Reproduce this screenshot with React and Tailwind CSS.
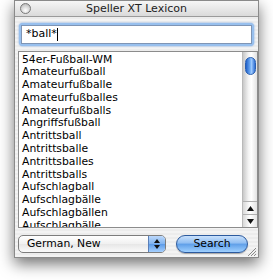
const words = [
  "54er-Fußball-WM",
  "Amateurfußball",
  "Amateurfußballe",
  "Amateurfußballes",
  "Amateurfußballs",
  "Angriffsfußball",
  "Antrittsball",
  "Antrittsballe",
  "Antrittsballes",
  "Antrittsballs",
  "Aufschlagball",
  "Aufschlagbälle",
  "Aufschlagbällen",
  "Aufschlagbälle",
]

function ScrollBar() {
  return (
    <div className="w-[15px] flex flex-col border-l border-[#b9b9b9] bg-[linear-gradient(to_right,#c8c8c8,#f4f4f4_40%,#ffffff_60%,#e2e2e2)]">
      <div className="h-[5px]" />
      <div className="mx-auto w-[11px] h-[18px] rounded-full border border-[#2a5fb0] bg-[linear-gradient(to_right,#1f5fc8,#6aa8f2_45%,#9fcbff_60%,#2f6fd4)]" />
      <div className="flex-1" />
      <div className="h-[1px] bg-[#b0b0b0]" />
      <div className="h-[12px] flex items-center justify-center bg-[linear-gradient(to_right,#d8d8d8,#ffffff_50%,#e4e4e4)]">
        <svg width="7" height="5" viewBox="0 0 7 5"><path d="M3.5 0L7 5H0z" fill="#111" /></svg>
      </div>
      <div className="h-[1px] bg-[#b0b0b0]" />
      <div className="h-[12px] flex items-center justify-center bg-[linear-gradient(to_right,#d8d8d8,#ffffff_50%,#e4e4e4)]">
        <svg width="7" height="5" viewBox="0 0 7 5"><path d="M0 0H7L3.5 5z" fill="#111" /></svg>
      </div>
    </div>
  )
}

export default function App() {
  return (
    <div className="w-[273px] h-[280px] bg-white font-['DejaVu_Sans',sans-serif] text-black">
      <div className="ml-[14px] w-[245px] h-[258px] flex flex-col shadow-[0_6px_14px_rgba(0,0,0,0.55)] border border-[#8a8a8a] bg-[repeating-linear-gradient(to_bottom,#ececec_0px,#ececec_2px,#f3f3f3_2px,#f3f3f3_4px)]">
        {/* title bar */}
        <div className="h-[16px] flex items-center relative border-b border-[#9a9a9a] bg-[linear-gradient(to_bottom,#f6f6f6,#dadada)]">
          <div className="absolute left-[5px] top-[2px] w-[11px] h-[11px] rounded-full border border-[#7a7a7a] bg-[radial-gradient(circle_at_50%_70%,#ffffff,#d0d0d0_60%,#a8a8a8)]" />
          <div className="flex-1 text-center text-[11px] leading-[16px] text-[#222]">Speller XT Lexicon</div>
        </div>

        {/* search field */}
        <div className="mt-[6px] mx-[4px] h-[23px] rounded-[4px] p-[2px] bg-[#98c0ee] shadow-[0_0_2px_#6b9ee0]">
          <div className="h-full bg-white border border-[#7f95b5] flex items-center px-[4px] text-[11px]">
            <span>*ball*</span>
            <span className="w-[1px] h-[13px] bg-black" />
          </div>
        </div>

        {/* list */}
        <div className="mt-[5px] ml-[3px] h-[177px] flex border border-[#8c8c8c] bg-white">
          <div className="flex-1 overflow-hidden pl-[3px] pt-[1.5px]">
            {words.map((w, i) => (
              <div key={i} className="h-[12.8px] text-[10.8px] leading-[12.8px] whitespace-nowrap">{w}</div>
            ))}
          </div>
          <ScrollBar />
        </div>

        {/* bottom controls */}
        <div className="mt-[7px] flex items-center px-[3px] relative">
          <div className="w-[148px] h-[18px] flex rounded-[5px] border border-[#7d7d7d] bg-[linear-gradient(to_bottom,#ffffff,#f0f0f0_50%,#e6e6e6_50%,#fafafa)] overflow-hidden">
            <div className="flex-1 text-[10.8px] leading-[16px] pl-[8px]">German, New</div>
            <div className="w-[17px] border-l border-[#5a7fb8] flex flex-col items-center justify-center gap-[2px] bg-[linear-gradient(to_bottom,#bcd8fb,#7fb3f0_50%,#5a9ae8_50%,#a6d0ff)]">
              <svg width="6" height="4" viewBox="0 0 6 4"><path d="M3 0L6 4H0z" fill="#111" /></svg>
              <svg width="6" height="4" viewBox="0 0 6 4"><path d="M0 0H6L3 4z" fill="#111" /></svg>
            </div>
          </div>
          <div className="ml-[10px] w-[72px] h-[18px] rounded-full border border-[#2c5a9e] flex items-center justify-center text-[10.8px] leading-[16px] bg-[linear-gradient(to_bottom,#c9e1fc,#8fbdf2_45%,#5e9ee8_50%,#9fd0ff)] shadow-[0_1px_1px_rgba(0,0,0,0.3)]">
            Search
          </div>
          <svg className="absolute right-[1px] top-[12px]" width="10" height="10" viewBox="0 0 10 10">
            <path d="M9 1L1 9M9 4L4 9M9 7L7 9" stroke="#8a8a8a" strokeWidth="1" />
          </svg>
        </div>
      </div>
    </div>
  )
}
